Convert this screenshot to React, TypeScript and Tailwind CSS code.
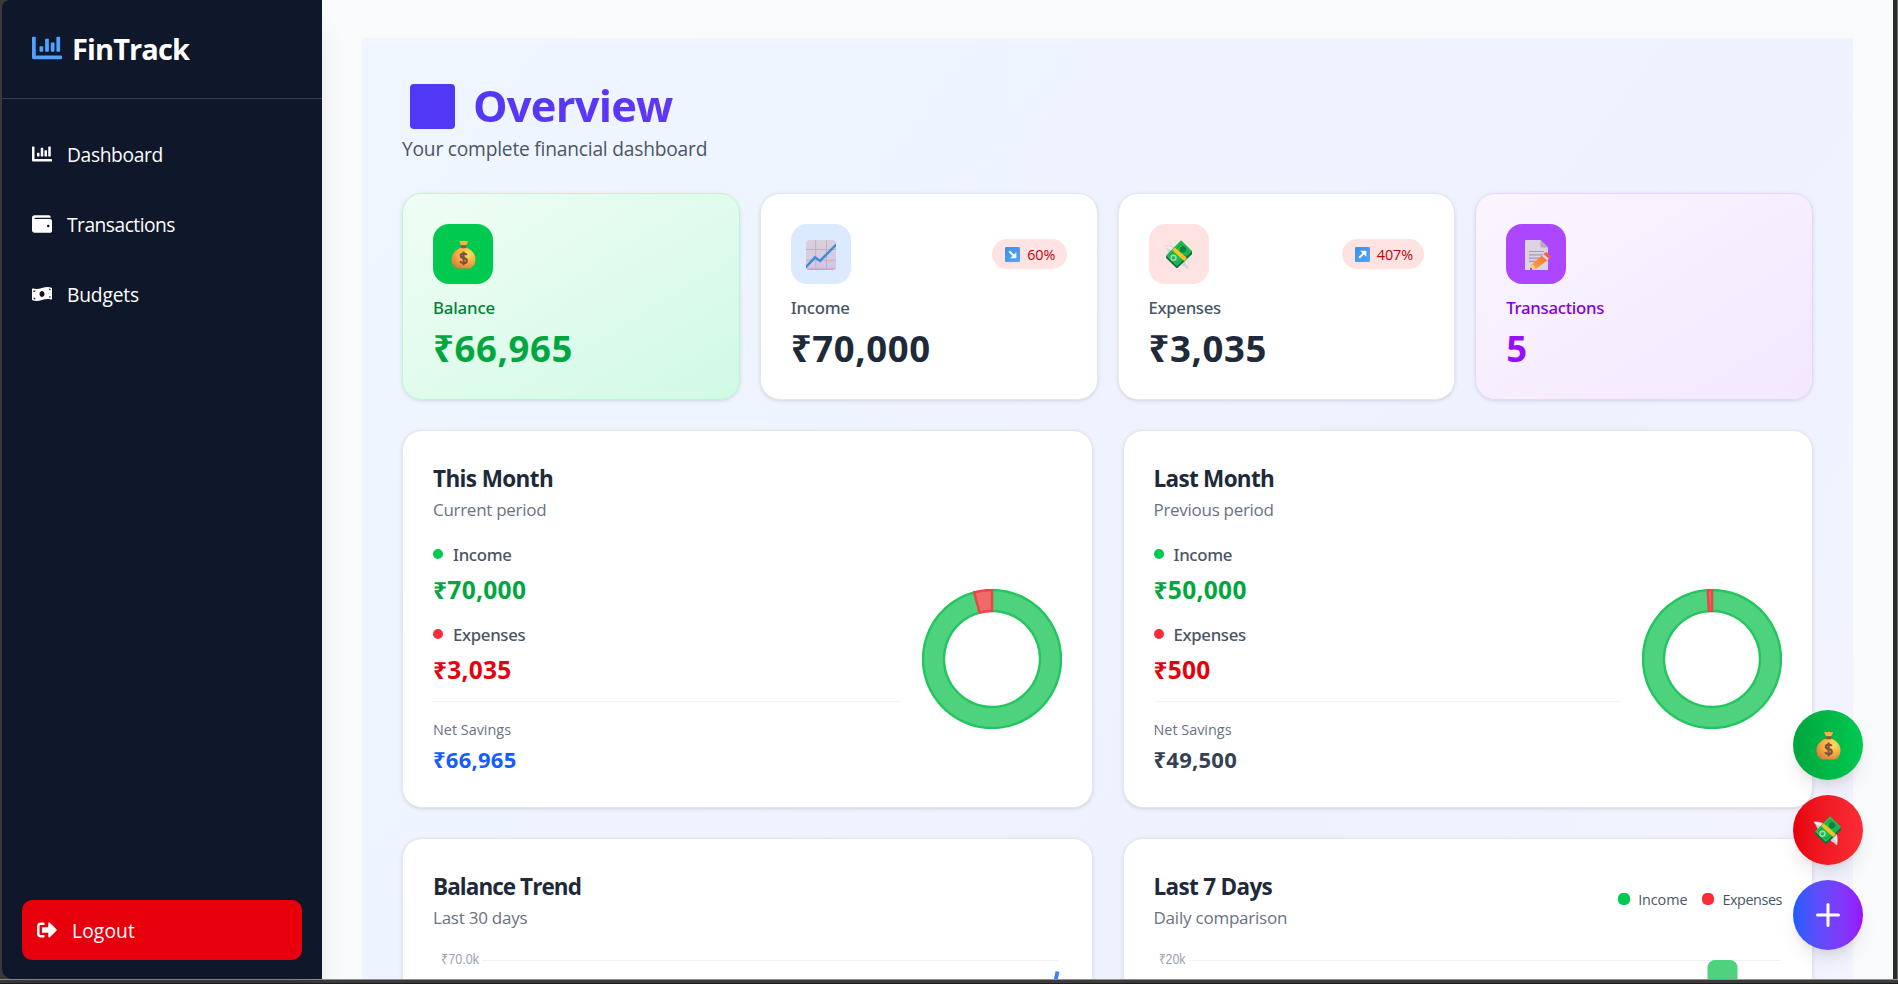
import React from 'react';
import { FaChartBar, FaWallet, FaMoneyBillWave, FaSignOutAlt } from 'react-icons/fa';

const sans = "font-['Open_Sans','Noto_Sans',sans-serif]";
const label = "font-['Noto_Sans',sans-serif] font-medium";

function MoneyBag({ id }: { id: string }) {
  return (
    <svg viewBox="0 0 30 30" className="size-[30px]">
      <defs>
        <radialGradient id={id} cx="0.68" cy="0.3" r="0.85">
          <stop offset="0" stopColor="#ffe35e" />
          <stop offset="0.5" stopColor="#f6ad42" />
          <stop offset="1" stopColor="#d2743c" />
        </radialGradient>
      </defs>
      <g transform="translate(.6 .8)">
        <path d="M11.2 1.2c1.200-.5 1.700.6 2.700.1.900-.6 1.700-.5 2.500 0 1 .5 1.600-.4 2.700 0 .9.500-.4 2.300-1.800 4.400h-4.400c-1.500-2.100-2.600-4-1.700-4.500z" fill="#f7b23f" />
        <path d="M12.300 7.800h5.400c6.500 2.600 9.200 7.200 9.200 11.600 0 5.800-3.600 9.300-7.600 9.300h-8.700c-4.200 0-7.800-3.500-7.800-9.300 0-4.400 3-9 9.500-11.600z" fill={`url(#${id})`} />
        <rect x="12.300" y="5.400" width="5.400" height="3" rx="0.800" fill="#8d5546" />
        <path d="M18.300 15.200c-.8-1.100-2-1.500-3.300-1.400-3.800.3-3.700 3.700 0 4.400 4.600.8 4.200 5.100 0 5.100-1.600 0-2.900-.6-3.600-1.800M15 11.600v13.800" fill="none" stroke="#80503f" strokeWidth="2.100" />
      </g>
    </svg>
  );
}

function ChartUp() {
  return (
    <svg viewBox="0 0 30 30" className="size-[30px] translate-y-[1px]">
      <defs>
        <linearGradient id="paper" x1="0" y1="0" x2="0" y2="1">
          <stop offset="0" stopColor="#d9d0dc" />
          <stop offset="0.9" stopColor="#d5c6e6" />
          <stop offset="1" stopColor="#bd9fd0" />
        </linearGradient>
      </defs>
      <rect width="30" height="30" rx="3.500" fill="url(#paper)" />
      <path d="M9.700 0v30M20.500 0v30M0 9.500h30M0 20.200h30" stroke="#bdb2c2" strokeWidth="1" />
      <path d="M-.5 27.500 9 17.300l5 3.600L30.500 4.300" fill="none" stroke="#3a8fd4" strokeWidth="2.500" />
    </svg>
  );
}

function MoneyWings() {
  return (
    <svg viewBox="0 0 30 30" className="size-[30px] translate-y-[1px]">
      <path d="M.5 5.500c4-.3 8 .3 11 2.500l-5 6.500C3.500 12.500 4 10 2.500 9c.5-1-1-1.500-2-3.500z" fill="#d3d0d6" />
      <path d="M1 6c4 0 7 1 9.500 2.500l-2 2.500C6 9 4 8.500 2 7.500z" fill="#f1eff3" />
      <path d="M18.500 18.500l4-3.500c2.500 4 2.500 9 1.700 14-2-.2-2.700-1.500-3.200-2.500-1.500 0-2.500-1-3.200-2z" fill="#d3d0d6" />
      <path d="M20.500 18l2-2c1.500 4 1.700 7.500 1.200 11.500-1.700-3-2.500-6-3.200-9.500z" fill="#f1eff3" />
      <path d="M2 16.500 17.200 2 28 11.500v2.700L13.500 28h-1.200L2 18z" fill="#13713f" />
      <path d="M2 15.500 16.500.8c.4-.3.8-.3 1.200 0L28 11 13 26z" fill="#1ebe55" />
      <path d="M5.500 15.500 17 4l7.800 7.500L13 23z" fill="none" stroke="#149748" strokeWidth="1" />
      <circle cx="19" cy="9.500" r="3.200" fill="#10823f" />
      <circle cx="9.500" cy="17.700" r="2.500" fill="none" stroke="#9ce0b3" strokeWidth="1.400" />
      <path d="M8.200 10.100l2.700-2.700L23 18.200l-2.800 2.900z" fill="#fcc21b" />
    </svg>
  );
}

function Memo() {
  return (
    <svg viewBox="0 0 30 30" className="size-[30px] translate-y-[1px]">
      <defs>
        <linearGradient id="pencil" x1="0" y1="1" x2="1" y2="0">
          <stop offset="0" stopColor="#ffab45" />
          <stop offset="1" stopColor="#f5672f" />
        </linearGradient>
      </defs>
      <path d="M4 1.200C4 .5 4.500 0 5.200 0H19.500L27 7.500V30H4z" fill="#dcd3e2" />
      <path d="M19.500 0 27 7.500h-6.500c-.6 0-1-.4-1-1z" fill="#b5aac0" />
      <path d="M8 11.500h15M8 14.800h15M8 18.100h12M8 21.400h9" stroke="#a499b2" strokeWidth="1.200" />
      <path d="M9 29.800l2-5.500L22.500 14l5.500 5L14.500 29.200z" fill="url(#pencil)" />
      <path d="M9 29.800l2-5.500c1.700.7 3 2.300 3.500 4.900z" fill="#f3c8a0" />
      <path d="M9 29.800l.8-2.300 1.500 1.900z" fill="#4a3a46" />
      <path d="M20.800 15.700 22.700 14l5.300 4.700-2 1.600z" fill="#ded8e4" />
      <path d="M22.700 14l1.600-1.500c.5-.5 1-.5 1.600 0l3.800 3.500c.4.4.4.800 0 1.200L28 18.700z" fill="#f2574f" />
    </svg>
  );
}

function ArrowEmoji({ up }: { up: boolean }) {
  return (
    <svg viewBox="0 0 15 15" className="size-[15px]">
      <defs>
        <linearGradient id={up ? 'ar-up' : 'ar-down'} x1="0" y1="0" x2="1" y2="1">
          <stop offset="0" stopColor="#3f8fdc" />
          <stop offset="1" stopColor="#55a4ff" />
        </linearGradient>
      </defs>
      <rect width="15" height="15" rx="1.200" fill={`url(#${up ? 'ar-up' : 'ar-down'})`} />
      <g transform={up ? 'matrix(1 0 0 -1 0 15)' : undefined} fill="#fff">
        <path d="M4.200 4.200 8.600 8.600" stroke="#fff" strokeWidth="2" />
        <path d="M11.300 5.200v5.500c0 .3-.3.600-.6.600H5.200z" />
      </g>
    </svg>
  );
}

const nav = [
  { Icon: FaChartBar, text: 'Dashboard', track: 'tracking-[-0.018em]' },
  { Icon: FaWallet, text: 'Transactions', track: 'tracking-[-0.026em]' },
  { Icon: FaMoneyBillWave, text: 'Budgets', track: 'tracking-[-0.008em]' },
];

function Sidebar() {
  return (
    <aside className="relative z-10 flex w-[320px] shrink-0 flex-col rounded-tl-[8px] rounded-bl-[10px] bg-[#0f172a] text-white shadow-[0_25px_31px_-6px_rgba(0,0,0,0.1)]">
      <div className="flex h-[99px] items-start gap-[10px] border-b border-[#314158] px-[30px] pt-[33px]">
        <FaChartBar className="size-[30px] text-[#51a2ff]" />
        <span className="-mt-[4px] text-[29px] leading-[40px] font-bold tracking-[-0.031em]">FinTrack</span>
      </div>
      <nav className="mt-[26px] flex flex-col gap-[10px] px-[30px]">
        {nav.map(({ Icon, text, track }) => (
          <a key={text} className="flex h-[60px] items-center gap-[15px]">
            <Icon className="-mt-[3px] size-[20px]" />
            <span className={`text-[19.2px] leading-[30px] ${track}`}>{text}</span>
          </a>
        ))}
      </nav>
      <button className="mx-[20px] mt-auto mb-[19px] flex h-[60px] items-center gap-[15px] rounded-[10px] bg-[#e7000b] px-[15px]">
        <FaSignOutAlt className="size-[20px]" />
        <span className="mt-[2px] text-[19.2px] leading-[30px] tracking-[0.007em]">Logout</span>
      </button>
    </aside>
  );
}

interface StatProps {
  name: string;
  value: string;
  icon: React.ReactNode;
  card: string;
  box: string;
  nameClass: string;
  valueClass: string;
  badge?: { up: boolean; text: string };
}

function Stat({ name, value, icon, card, box, nameClass, valueClass, badge }: StatProps) {
  return (
    <div className={`h-[207px] rounded-[20px] border p-[30px] shadow-[0_1px_4px_rgba(0,0,0,0.1),0_1px_2px_-1px_rgba(0,0,0,0.1)] ${card}`}>
      <div className="flex items-center justify-between">
        <div className={`flex size-[60px] items-center justify-center rounded-[16px] ${box}`}>{icon}</div>
        {badge && (
          <div className="flex h-[30px] items-center gap-[7px] rounded-full bg-[#ffe2e2] pr-[11px] pl-[13px] text-[14.4px] text-[#c10007]">
            <ArrowEmoji up={badge.up} />
            <span className="mt-px leading-[20px]">{badge.text}</span>
          </div>
        )}
      </div>
      <p className={`mt-[11px] text-[16.8px] leading-[25px] ${label} ${nameClass}`}>{name}</p>
      <p className={`mt-[6px] text-[36.5px] leading-[45px] font-bold tracking-[0.017em] ${valueClass}`}>{value}</p>
    </div>
  );
}

const panel = 'rounded-[20px] border border-[#e5e7eb] bg-white p-[30px] shadow-[0_1px_4px_rgba(0,0,0,0.1),0_1px_2px_-1px_rgba(0,0,0,0.1)]';

function point(r: number, a: number) {
  return `${(70 + r * Math.sin(a)).toFixed(3)} ${(70 - r * Math.cos(a)).toFixed(3)}`;
}

function arc(from: number, to: number) {
  const large = to - from > Math.PI ? 1 : 0;
  return `M${point(69, from)}A69 69 0 ${large} 1 ${point(69, to)}L${point(48, to)}A48 48 0 ${large} 0 ${point(48, from)}Z`;
}

function Donut({ income, expenses }: { income: number; expenses: number }) {
  const cut = (income / (income + expenses)) * Math.PI * 2;
  return (
    <svg viewBox="0 0 140 140" className="size-[140px] shrink-0">
      <path d={arc(0, cut)} fill="#4ed27e" stroke="#22c55e" strokeWidth="2.400" />
      <path d={arc(cut, Math.PI * 2)} fill="#f26969" stroke="#ef4444" strokeWidth="2.400" />
    </svg>
  );
}

function Heading({ title, sub, titleTrack, subTrack }: { title: string; sub: string; titleTrack: string; subTrack: string }) {
  return (
    <div>
      <h3 className={`text-[22.5px] leading-[36px] font-bold text-[#1e2939] ${titleTrack}`}>{title}</h3>
      <p className={`text-[17px] leading-[25px] text-[#6a7282] ${subTrack}`}>{sub}</p>
    </div>
  );
}

function Month(props: { title: string; sub: string; titleTrack: string; subTrack: string; income: number; expenses: number; netClass: string }) {
  const { income, expenses, netClass } = props;
  const money = (n: number) => '₹' + n.toLocaleString('en-US');
  return (
    <div className={`h-[378px] ${panel}`}>
      <Heading {...props} />
      <div className="mt-[20px] flex items-center gap-[20px]">
        <div className="flex-1">
          <div className="flex items-center gap-[10px]">
            <span className="-mt-px size-[10px] rounded-full bg-[#00c950]" />
            <span className={`text-[16.8px] leading-[25px] tracking-[-0.018em] text-[#4a5565] ${label}`}>Income</span>
          </div>
          <p className="mt-[5px] text-[24.5px] leading-[35px] font-bold tracking-[0.013em] text-[#00a63e]">{money(income)}</p>
          <div className="mt-[15px] flex items-center gap-[10px]">
            <span className="-mt-px size-[10px] rounded-full bg-[#fb2c36]" />
            <span className={`text-[16.8px] leading-[25px] tracking-[-0.02em] text-[#4a5565] ${label}`}>Expenses</span>
          </div>
          <p className="mt-[5px] text-[24.5px] leading-[35px] font-bold tracking-[0.01em] text-[#e7000b]">{money(expenses)}</p>
          <div className="mt-[14px] border-t border-[#f3f4f6] pt-[18px]">
            <p className="text-[14.4px] leading-[20px] text-[#6a7282]">Net Savings</p>
            <p className={`mt-[2px] -mb-px text-[22px] leading-[35px] font-bold tracking-[0.011em] ${netClass}`}>{money(income - expenses)}</p>
          </div>
        </div>
        <Donut income={income} expenses={expenses} />
      </div>
    </div>
  );
}

const axis = "fill-[#9ca3af] font-['Liberation_Sans',sans-serif] text-[14px]";
const fab = 'flex size-[70px] items-center justify-center rounded-full shadow-[0_12px_19px_-4px_rgba(0,0,0,0.1),0_5px_8px_-5px_rgba(0,0,0,0.1)]';

export default function App() {
  return (
    <div className={`relative flex h-[984px] w-[1898px] flex-col overflow-hidden bg-[#3a3b3a] ${sans}`}>
      <div className="flex h-[979px] pl-[2px]">
        <Sidebar />
        <main className="h-[979px] w-[1571px] overflow-hidden bg-[#f9fafb] bg-linear-to-r from-[#f9fafb] to-[#f8fafc] px-[40px] pt-[38px]">
          <div className="h-[2000px] bg-linear-to-br from-[#eff6ff] via-[#eef2ff] to-[#faf5ff] px-[40px] pt-[42px]">
            <h1 className="flex h-[51px] items-center bg-linear-to-r from-[#4f39f6] to-[#9810fa] bg-clip-text pt-px pl-[8px] text-[43.5px] leading-[50px] font-bold tracking-[-0.018em] text-transparent">
              <span className="mr-[18px] size-[45px] rounded-[4px] bg-linear-to-r from-[#4f39f6] to-[#5138f6]" />
              Overview
            </h1>
            <p className="mt-[3px] mb-[29px] text-[19.2px] leading-[30px] tracking-[-0.011em] text-[#4a5565]">Your complete financial dashboard</p>

            <div className="grid grid-cols-4 gap-[20px]">
              <Stat name="Balance" value="₹66,965" icon={<MoneyBag id="bag-card" />} card="border-[#b9f8cf] bg-linear-to-br from-[#f0fdf4] to-[#d0fae5]" box="bg-[#00c950]" nameClass="text-[#008236] tracking-[-0.01em]" valueClass="text-[#00a63e]" />
              <Stat name="Income" value="₹70,000" icon={<ChartUp />} card="border-[#e5e7eb] bg-white" box="bg-[#dbeafe]" nameClass="text-[#4a5565] tracking-[-0.016em]" valueClass="text-[#1e2939]" badge={{ up: false, text: '60%' }} />
              <Stat name="Expenses" value="₹3,035" icon={<MoneyWings />} card="border-[#e5e7eb] bg-white" box="bg-[#ffe2e2]" nameClass="text-[#4a5565] tracking-[-0.02em]" valueClass="text-[#1e2939]" badge={{ up: true, text: '407%' }} />
              <Stat name="Transactions" value="5" icon={<Memo />} card="border-[#e9d4ff] bg-linear-to-br from-[#faf5ff] to-[#f3e8ff]" box="bg-[#ad46ff]" nameClass="text-[#8200db] tracking-[-0.017em]" valueClass="text-[#9810fa]" />
            </div>

            <div className="mt-[30px] grid grid-cols-2 gap-[30px]">
              <Month title="This Month" sub="Current period" titleTrack="tracking-[-0.027em]" subTrack="tracking-[-0.017em]" income={70000} expenses={3035} netClass="text-[#155dfc]" />
              <Month title="Last Month" sub="Previous period" titleTrack="tracking-[-0.031em]" subTrack="tracking-[-0.017em]" income={50000} expenses={500} netClass="text-[#364153]" />

              <div className={`h-[420px] ${panel}`}>
                <Heading title="Balance Trend" sub="Last 30 days" titleTrack="tracking-[-0.042em]" subTrack="tracking-[-0.014em]" />
                <svg viewBox="0 0 628 60" className="h-[60px] w-[628px]">
                  <text x="8" y="34" textLength="38" lengthAdjust="spacingAndGlyphs" className={axis}>₹70.0k</text>
                  <path d="M49 30.500H625.500" stroke="#f0f1f2" strokeWidth="1" />
                  <path d="M624.500 41.500 620.500 60" fill="none" stroke="#3b82f6" strokeWidth="3.800" />
                </svg>
              </div>
              <div className={`h-[420px] ${panel}`}>
                <div className="flex items-center justify-between">
                  <Heading title="Last 7 Days" sub="Daily comparison" titleTrack="tracking-[-0.03em]" subTrack="tracking-[-0.013em]" />
                  <div className="flex items-center gap-[15px] text-[14.4px] leading-[20px] text-[#4a5565]">
                    <span className="flex items-center gap-[8px] tracking-[-0.006em]"><i className="-mt-px size-[12px] rounded-[5px] bg-[#00c950]" />Income</span>
                    <span className="flex items-center gap-[8px] tracking-[-0.03em]"><i className="-mt-px size-[12px] rounded-[5px] bg-[#fb2c36]" />Expenses</span>
                  </div>
                </div>
                <svg viewBox="0 0 628 60" className="h-[60px] w-[628px]">
                  <text x="4.500" y="34" textLength="27" lengthAdjust="spacingAndGlyphs" className={axis}>₹20k</text>
                  <path d="M35.500 30.500H627" stroke="#f0f1f2" strokeWidth="1" />
                  <rect x="553.500" y="30" width="30" height="60" rx="7.500" fill="#4ed27e" />
                </svg>
              </div>
            </div>
          </div>
        </main>
        <div className="w-[4px] bg-[#2b2b2b]" />
        <div className="w-px bg-[#6f7070]" />
      </div>
      <div className="h-px bg-[#8f9192]" />
      <div className="h-[3px] bg-[#3a3b3a]" />
      <div className="h-px bg-[#1c1c1c]" />

      <div className="absolute top-[710px] right-[35px] z-20 flex flex-col gap-[15px]">
        <button className={`${fab} bg-linear-to-r from-[#00a63e] to-[#00c950]`}><MoneyBag id="bag-fab" /></button>
        <button className={`${fab} bg-linear-to-r from-[#e7000b] to-[#fb2c36]`}><MoneyWings /></button>
        <button className={`${fab} bg-linear-to-r from-[#155dfc] to-[#9810fa]`}>
          <svg viewBox="0 0 30 30" className="size-[30px]">
            <path d="M15 4.500v21M4.500 15h21" stroke="#fff" strokeWidth="3" strokeLinecap="round" />
          </svg>
        </button>
      </div>
    </div>
  );
}
